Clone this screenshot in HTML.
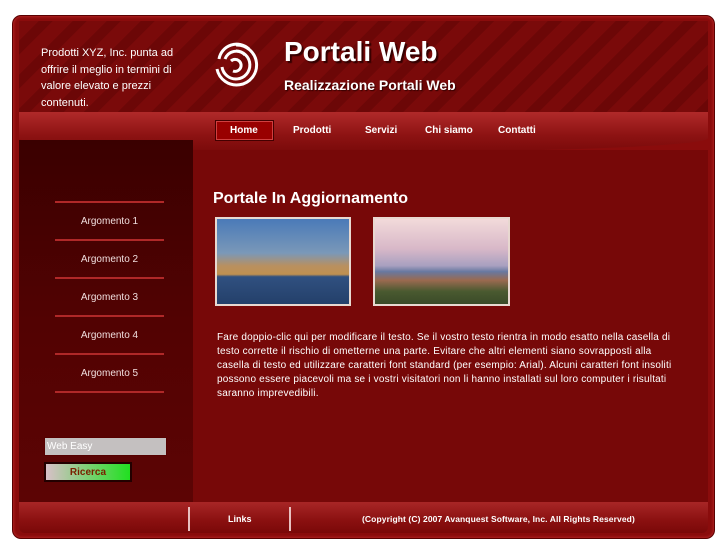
<!DOCTYPE html>
<html><head><meta charset="utf-8"><style>
*{margin:0;padding:0;box-sizing:border-box}
body{width:727px;height:545px;background:#fff;position:relative;overflow:hidden;font-family:"Liberation Sans",sans-serif}
.frame{position:absolute;left:12px;top:15px;width:703px;height:524px;border-radius:9px;background:#8a0c0c;border:1px solid #5a0000;box-shadow:inset 0 0 3px #c33}
.hdr{position:absolute;left:19px;top:21px;width:689px;height:92px;background:repeating-linear-gradient(135deg,#7a0a0a 0 14px,#6c0707 14px 24px);}
.nav{position:absolute;left:19px;top:112px;width:689px;height:40px;background:linear-gradient(#b02a2a,#8c1212 60%,#7a0a0a);border-radius:0 0 50% 50%/0 0 14px 14px}
.side{position:absolute;left:19px;top:140px;width:174px;height:362px;background:linear-gradient(#3a0000,#520202 50%,#5c0404);}
.main{position:absolute;left:193px;top:150px;width:515px;height:352px;background:#770808}
.foot{position:absolute;left:19px;top:502px;width:689px;height:31px;background:linear-gradient(#a82626,#8a1010 60%,#7a0808);border-radius:0 0 6px 6px}
.t{position:absolute;color:#fff}
.navi{position:absolute;top:125px;font-size:10px;font-weight:bold;color:#fff}
.hr{position:absolute;left:55px;width:109px;height:2px;background:#b02828}
.arg{position:absolute;left:55px;width:109px;text-align:center;font-size:10px;color:#f0dede}
</style></head><body>
<div class="frame"></div>
<div class="hdr"></div>
<div class="nav"></div>
<div class="side"></div>
<div class="main"></div>
<div class="foot"></div>
<div class="t" style="left:41px;top:45px;font-size:11px;line-height:16.5px;width:150px">Prodotti XYZ, Inc. punta ad offrire il meglio in termini di valore elevato e prezzi contenuti.</div>
<svg style="position:absolute;left:211px;top:41px" width="50" height="48" viewBox="0 0 50 48"><g fill="none" stroke="#fff" stroke-width="3">
<path d="M25 4 A20 20 0 1 1 6 28"/><path d="M25 10 A14 14 0 1 1 11 26"/><path d="M8 18 A18 18 0 0 1 38 8"/><path d="M14 18 A12 12 0 0 1 34 14"/><path d="M20 20 A6 6 0 1 1 22 30"/></g></svg>
<div class="t" style="left:284px;top:36px;font-size:28px;font-weight:bold;text-shadow:2px 2px 1px #300">Portali Web</div>
<div class="t" style="left:284px;top:77px;font-size:14px;font-weight:bold;text-shadow:1px 1px 1px #300">Realizzazione Portali Web</div>
<div style="position:absolute;left:216px;top:121px;width:57px;height:19px;background:#900;border:1px solid #d04040;box-shadow:0 0 0 1px #400"></div>
<div class="navi" style="left:230px">Home</div>
<div class="navi" style="left:293px">Prodotti</div>
<div class="navi" style="left:365px">Servizi</div>
<div class="navi" style="left:425px">Chi siamo</div>
<div class="navi" style="left:498px">Contatti</div>
<div class="hr" style="top:201px"></div><div class="arg" style="top:216px">Argomento 1</div>
<div class="hr" style="top:239px"></div><div class="arg" style="top:254px">Argomento 2</div>
<div class="hr" style="top:277px"></div><div class="arg" style="top:292px">Argomento 3</div>
<div class="hr" style="top:315px"></div><div class="arg" style="top:330px">Argomento 4</div>
<div class="hr" style="top:353px"></div><div class="arg" style="top:368px">Argomento 5</div>
<div class="hr" style="top:391px"></div>
<div style="position:absolute;left:44px;top:437px;width:123px;height:19px;background:#c4c0c0;border:1px solid #500;color:#fff;font-size:10px;padding:3px 2px">Web Easy</div>
<div style="position:absolute;left:44px;top:462px;width:88px;height:20px;background:linear-gradient(90deg,#d8c0c8,#20e020);border:2px solid #200;color:#7a2000;font-size:10px;font-weight:bold;text-align:center;padding-top:3px">Ricerca</div>
<div class="t" style="left:213px;top:190px;font-size:16px;font-weight:bold">Portale In Aggiornamento</div>
<div style="position:absolute;left:215px;top:217px;width:136px;height:89px;border:2px solid #e8d8d0;background:linear-gradient(#4a7ab8 0%,#7a98b8 40%,#b89060 55%,#c09050 65%,#305080 68%,#24406a 100%)"></div>
<div style="position:absolute;left:373px;top:217px;width:137px;height:89px;border:2px solid #e8d8d0;background:linear-gradient(#f2dada 0%,#d8b8c8 35%,#a8a0c0 55%,#6878a0 62%,#9a6a50 72%,#4a5a30 85%,#3a4a28 100%)"></div>
<div class="t" style="left:217px;top:331px;width:468px;font-size:10px;line-height:14px;letter-spacing:0.2px">Fare doppio-clic qui per modificare il testo. Se il vostro testo rientra in modo esatto nella casella di<br>testo corrette il rischio di ometterne una parte. Evitare che altri elementi siano sovrapposti alla<br>casella di testo ed utilizzare caratteri font standard (per esempio: Arial). Alcuni caratteri font insoliti<br>possono essere piacevoli ma se i vostri visitatori non li hanno installati sul loro computer i risultati<br>saranno imprevedibili.</div>
<div style="position:absolute;left:188px;top:507px;width:2px;height:24px;background:#e8c0c0"></div>
<div style="position:absolute;left:289px;top:507px;width:2px;height:24px;background:#e8c0c0"></div>
<div class="t" style="left:228px;top:514px;font-size:9px;font-weight:bold">Links</div>
<div class="t" style="left:362px;top:514px;font-size:8.5px;font-weight:bold;letter-spacing:0.1px">(Copyright (C) 2007 Avanquest Software, Inc. All Rights Reserved)</div>
</body></html>
